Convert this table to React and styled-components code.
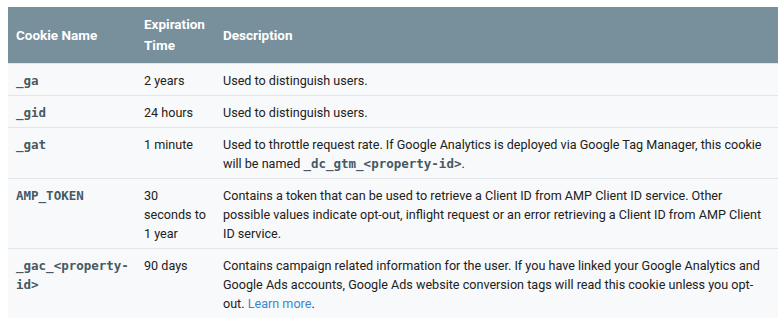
import React from 'react'
import styled, { createGlobalStyle } from 'styled-components'

const GlobalStyle = createGlobalStyle`
    body {
        margin: 0;
        background: #fff;
        font-family: Roboto, "Noto Sans", sans-serif;
    }
`;

const Page = styled.div`
    padding: 7px 3px 0 8px;
`;

const Table = styled.table`
    width: 770px;
    border-collapse: collapse;
    table-layout: fixed;
    font-size: 12.6px;
    color: #212121;
`;

const HeadCell = styled.th`
    background: #78909c;
    color: #fff;
    font-weight: 700;
    font-size: 13.5px;
    line-height: 21px;
    text-align: left;
    vertical-align: middle;
    padding: 7px 6px 7px 8px;
`;

const Row = styled.tr`
    background: #f8f9fa;
    border-top: 1px solid #e3e6e8;
`;

const Cell = styled.td`
    vertical-align: top;
    line-height: 19px;
    padding: 7px ${({ narrow }) => narrow ? 9 : 6}px 5px 8px;
`;

const Code = styled.code`
    font-family: "DejaVu Sans Mono", "Liberation Mono", monospace;
    font-size: 12.5px;
    font-weight: 700;
    color: #455a64;
`;

const MoreLink = styled.a`
    color: #3a87d0;
    text-decoration: none;
`;

const rows = [
    { name: '_ga', time: '2 years', desc: 'Used to distinguish users.' },
    { name: '_gid', time: '24 hours', desc: 'Used to distinguish users.' },
    {
        name: '_gat',
        time: '1 minute',
        desc: <>Used to throttle request rate. If Google Analytics is deployed via Google Tag Manager, this cookie will be named <Code>_dc_gtm_&lt;property-id&gt;</Code>.</>,
    },
    {
        name: 'AMP_TOKEN',
        time: '30 seconds to 1 year',
        desc: 'Contains a token that can be used to retrieve a Client ID from AMP Client ID service. Other possible values indicate opt-out, inflight request or an error retrieving a Client ID from AMP Client ID service.',
    },
    {
        name: '_gac_<property-id>',
        time: '90 days',
        desc: <>Contains campaign related information for the user. If you have linked your Google Analytics and Google Ads accounts, Google Ads website conversion tags will read this cookie unless you opt-out. <MoreLink href="#">Learn more</MoreLink>.</>,
    },
];

export default function App() {
    return (
        <Page>
            <GlobalStyle />
            <Table>
                <colgroup>
                    <col style={{ width: 128 }} />
                    <col style={{ width: 79 }} />
                    <col />
                </colgroup>
                <thead>
                    <tr>
                        <HeadCell>Cookie Name</HeadCell>
                        <HeadCell>Expiration Time</HeadCell>
                        <HeadCell>Description</HeadCell>
                    </tr>
                </thead>
                <tbody>
                    {rows.map((r) => (
                        <Row key={r.name}>
                            <Cell><Code>{r.name}</Code></Cell>
                            <Cell narrow>{r.time}</Cell>
                            <Cell>{r.desc}</Cell>
                        </Row>
                    ))}
                </tbody>
            </Table>
        </Page>
    )
}
